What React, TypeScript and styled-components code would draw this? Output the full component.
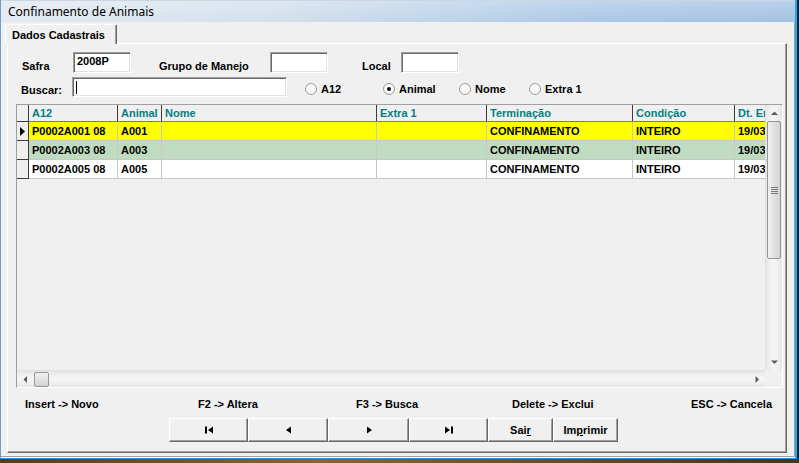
import React from 'react';
import styled, { createGlobalStyle } from 'styled-components';

const GlobalStyle = createGlobalStyle`
  html, body {
    margin: 0;
    padding: 0;
  }
  body {
    background: #0f2240;
    font-family: "Liberation Sans", Arial, sans-serif;
  }
`;

const Screen = styled.div`
  width: 799px;
  height: 463px;
  overflow: hidden;
  display: flex;
  flex-direction: column;
  background: #0e2342;
`;

const Desktop = styled.div`
  flex: 1;
  background: linear-gradient(to right, #5a3a1c, #8a6236 40%, #4a321c);
`;

const Window = styled.div`
  width: 797px;
  height: 459px;
  box-sizing: border-box;
  display: flex;
  flex-direction: column;
  border-left: 1px solid #6a9fd2;
  border-right: 2px solid #25a6e2;
  border-bottom: 1px solid #3b8ad0;
  background: #f0f0f0;
`;

const TitleBar = styled.div`
  height: 22px;
  flex: none;
  display: flex;
  align-items: center;
  padding-left: 7px;
  background: linear-gradient(to bottom, rgba(255, 255, 255, 0.25), rgba(255, 255, 255, 0)),
    linear-gradient(to right, #e3e9f0 0%, #d2dfec 35%, #aac7e6 75%, #a3c2e3 100%);
  border-top: 1px solid #c9d6e4;
  box-sizing: border-box;
  font-family: "Noto Sans", "Liberation Sans", sans-serif;
  font-size: 12px;
  color: #000;
`;

const Client = styled.div`
  flex: 1;
  display: flex;
  flex-direction: column;
  padding: 2px 0 0 4px;
  box-shadow: inset 0 -1px #ffffff, inset 0 -2px #a0a0a0, inset -1px 0 #a0a0a0;
`;

const TabStrip = styled.div`
  display: flex;
  height: 19px;
`;

const Tab = styled.div`
  display: flex;
  align-items: center;
  padding: 0 8px 0 6px;
  width: 112px;
  box-sizing: border-box;
  border-left: 1px solid #ffffff;
  border-top: 1px solid #ffffff;
  border-right: 1px solid #696969;
  box-shadow: inset -1px 0 #a0a0a0;
  border-radius: 2px 2px 0 0;
  font-size: 11px;
  font-weight: bold;
  color: #000;
  position: relative;
  z-index: 1;
  background: #f0f0f0;
  margin-bottom: -1px;
`;

const TabPanel = styled.div`
  margin-left: 2px;
  width: 780px;
  height: 410px;
  box-sizing: border-box;
  border-top: 1px solid #ffffff;
  border-left: 1px solid #ffffff;
  border-right: 1px solid #696969;
  border-bottom: 1px solid #696969;
  box-shadow: inset -1px -1px #a0a0a0;
  display: flex;
  flex-direction: column;
`;

const FieldRow = styled.div<{ $top: number; $indent: number; $height: number }>`
  display: flex;
  align-items: flex-end;
  margin-top: ${(p) => p.$top}px;
  padding-left: ${(p) => p.$indent}px;
  height: ${(p) => p.$height}px;
`;

const Label = styled.div<{ $w: number; $gap?: number }>`
  width: ${(p) => p.$w}px;
  margin-left: ${(p) => p.$gap ?? 0}px;
  flex: none;
  font-size: 11px;
  font-weight: bold;
  color: #000;
  padding-bottom: 1px;
  white-space: nowrap;
`;

const TextBox = styled.div<{ $w: number; $h: number }>`
  width: ${(p) => p.$w}px;
  height: ${(p) => p.$h}px;
  flex: none;
  box-sizing: border-box;
  background: #ffffff;
  border-top: 1px solid #a0a0a0;
  border-left: 1px solid #a0a0a0;
  border-right: 1px solid #ffffff;
  border-bottom: 1px solid #ffffff;
  box-shadow: inset 1px 1px #696969, inset -1px -1px #e3e3e3;
  padding: 2px 3px;
  font-size: 11px;
  font-weight: bold;
  color: #000;
  line-height: 12px;
`;

const Caret = styled.span`
  display: inline-block;
  width: 1px;
  height: 13px;
  background: #000;
  margin-top: 1px;
`;

const RadioGroup = styled.div`
  display: flex;
  align-items: center;
  margin-left: 18px;
  height: 20px;
  align-self: stretch;
`;

const RadioItem = styled.div<{ $w?: number }>`
  display: flex;
  align-items: center;
  gap: 4px;
  width: ${(p) => (p.$w ? `${p.$w}px` : 'auto')};
  font-size: 11px;
  font-weight: bold;
  color: #000;
  padding-top: 4px;
`;

const RadioCircle = styled.span<{ $checked?: boolean }>`
  width: 12px;
  height: 12px;
  box-sizing: border-box;
  border-radius: 50%;
  border: 1px solid #9c9c9c;
  background: radial-gradient(circle, #ffffff 40%, #ececec 100%);
  display: inline-flex;
  align-items: center;
  justify-content: center;

  &::after {
    content: '';
    width: 4px;
    height: 4px;
    border-radius: 50%;
    background: ${(p) => (p.$checked ? '#111' : 'transparent')};
  }
`;

const Grid = styled.div`
  margin-top: 7px;
  margin-left: 8px;
  width: 767px;
  height: 284px;
  box-sizing: border-box;
  border-top: 1px solid #a0a0a0;
  border-left: 1px solid #a0a0a0;
  border-right: 1px solid #ffffff;
  border-bottom: 1px solid #ffffff;
  display: grid;
  grid-template-columns: 1fr 17px;
  grid-template-rows: 1fr 17px;
  background: #f0f0f0;
`;

const DataArea = styled.div`
  overflow: hidden;
  display: flex;
  flex-direction: column;
`;

const GridRow = styled.div<{ $bg: string; $header?: boolean }>`
  display: flex;
  flex: none;
  height: ${(p) => (p.$header ? 16 : 18)}px;
  background: ${(p) => p.$bg};
  border-bottom: 1px solid ${(p) => (p.$header ? '#7a7a7a' : '#c8c8c8')};
  width: max-content;
`;

const Cell = styled.div<{ $w: number; $header?: boolean }>`
  width: ${(p) => p.$w}px;
  flex: none;
  box-sizing: border-box;
  border-right: 1px solid ${(p) => (p.$header ? '#3c3c3c' : '#c8c8c8')};
  padding-left: 3px;
  display: flex;
  align-items: center;
  font-size: 11px;
  font-weight: bold;
  color: ${(p) => (p.$header ? '#008080' : '#000')};
  white-space: nowrap;
  overflow: hidden;
`;

const Indicator = styled.div`
  width: 12px;
  flex: none;
  box-sizing: border-box;
  background: #f0f0f0;
  border-right: 1px solid #3c3c3c;
  box-shadow: 0 1px #3c3c3c;
  display: flex;
  align-items: center;
  justify-content: center;
`;

const VScroll = styled.div`
  display: flex;
  flex-direction: column;
  background: linear-gradient(to right, #e6e6e6, #f4f4f4 40%, #f4f4f4 60%, #e6e6e6);
  border-left: 1px solid #e0e0e0;
`;

const HScroll = styled.div`
  display: flex;
  align-items: center;
  background: linear-gradient(to bottom, #e6e6e6, #f4f4f4 40%, #f4f4f4 60%, #e6e6e6);
  border-top: 1px solid #e0e0e0;
`;

const ArrowBox = styled.div<{ $size: number }>`
  width: ${(p) => p.$size}px;
  height: ${(p) => p.$size}px;
  flex: none;
  display: flex;
  align-items: center;
  justify-content: center;
`;

const VThumb = styled.div`
  margin: 0 1px;
  height: 138px;
  box-sizing: border-box;
  border: 1px solid #979797;
  border-radius: 2px;
  background: linear-gradient(to right, #f2f2f2, #e2e2e2 50%, #d2d2d2);
  display: flex;
  align-items: center;
  justify-content: center;
  flex: none;
`;

const HThumb = styled.div`
  width: 15px;
  height: 15px;
  box-sizing: border-box;
  border: 1px solid #979797;
  border-radius: 2px;
  background: linear-gradient(to bottom, #f2f2f2, #e2e2e2 50%, #d2d2d2);
  flex: none;
  margin-left: 1px;
`;

const Spacer = styled.div`
  flex: 1;
`;

const Corner = styled.div`
  background: #f0f0f0;
`;

const ShortcutRow = styled.div`
  display: flex;
  margin-top: 9px;
  padding-left: 17px;
  height: 13px;
  align-items: center;
`;

const Shortcut = styled.div<{ $w?: number }>`
  width: ${(p) => (p.$w ? `${p.$w}px` : 'auto')};
  flex: none;
  font-size: 11px;
  font-weight: bold;
  color: #000;
  white-space: nowrap;
`;

const ButtonRow = styled.div`
  display: flex;
  margin-top: 8px;
  padding-left: 161px;
  height: 24px;
`;

const Button = styled.button<{ $w: number }>`
  width: ${(p) => p.$w}px;
  height: 24px;
  box-sizing: border-box;
  background: #f0f0f0;
  border: none;
  border-top: 1px solid #ffffff;
  border-left: 1px solid #ffffff;
  border-right: 1px solid #696969;
  border-bottom: 1px solid #696969;
  box-shadow: inset -1px -1px #a0a0a0;
  border-radius: 0;
  padding: 0;
  margin: 0;
  display: flex;
  align-items: center;
  justify-content: center;
  font-family: "Liberation Sans", Arial, sans-serif;
  font-size: 11px;
  font-weight: bold;
  color: #000;

  u {
    text-underline-offset: 1px;
  }
`;

const Tri = ({ dir, color = '#5a5a5a' }: { dir: 'up' | 'down' | 'left' | 'right'; color?: string }) => {
  const pts: Record<string, string> = {
    up: '0,4 3.5,0.5 7,4',
    down: '0,0.5 3.5,4 7,0.5',
    left: '4,0 0.5,3.5 4,7',
    right: '0.5,0 4,3.5 0.5,7',
  };
  const vertical = dir === 'up' || dir === 'down';
  return (
    <svg width={vertical ? 7 : 4} height={vertical ? 4 : 7} viewBox={vertical ? '0 0 7 4' : '0 0 4 7'}>
      <polygon points={pts[dir]} fill={color} />
    </svg>
  );
};

const NavIcon = ({ kind }: { kind: 'first' | 'prev' | 'next' | 'last' }) => (
  <svg width="10" height="8" viewBox="0 0 10 8">
    {kind === 'first' && (
      <>
        <rect x="1" y="0.5" width="2" height="7" fill="#000" />
        <polygon points="9,0.5 4,4 9,7.5" fill="#000" />
      </>
    )}
    {kind === 'prev' && <polygon points="8,0.5 3,4 8,7.5" fill="#000" />}
    {kind === 'next' && <polygon points="3,0.5 8,4 3,7.5" fill="#000" />}
    {kind === 'last' && (
      <>
        <polygon points="1,0.5 6,4 1,7.5" fill="#000" />
        <rect x="7" y="0.5" width="2" height="7" fill="#000" />
      </>
    )}
  </svg>
);

const columns = [
  { key: 'a12', title: 'A12', w: 89 },
  { key: 'animal', title: 'Animal', w: 44 },
  { key: 'nome', title: 'Nome', w: 215 },
  { key: 'extra', title: 'Extra 1', w: 110 },
  { key: 'term', title: 'Terminação', w: 146 },
  { key: 'cond', title: 'Condição', w: 102 },
  { key: 'dt', title: 'Dt. Entrada', w: 90 },
];

const rows = [
  { bg: '#ffff00', current: true, a12: 'P0002A001 08', animal: 'A001', nome: '', extra: '', term: 'CONFINAMENTO', cond: 'INTEIRO', dt: '19/03/2008' },
  { bg: '#c0dcc0', current: false, a12: 'P0002A003 08', animal: 'A003', nome: '', extra: '', term: 'CONFINAMENTO', cond: 'INTEIRO', dt: '19/03/2008' },
  { bg: '#ffffff', current: false, a12: 'P0002A005 08', animal: 'A005', nome: '', extra: '', term: 'CONFINAMENTO', cond: 'INTEIRO', dt: '19/03/2008' },
];

export default function App() {
  return (
    <>
      <GlobalStyle />
      <Screen>
        <Window>
          <TitleBar>Confinamento de Animais</TitleBar>
          <Client>
            <TabStrip>
              <Tab>Dados Cadastrais</Tab>
            </TabStrip>
            <TabPanel>
              <FieldRow $top={8} $indent={14} $height={21}>
                <Label $w={51}>Safra</Label>
                <TextBox $w={58} $h={21}>2008P</TextBox>
                <Label $w={111} $gap={28}>Grupo de Manejo</Label>
                <TextBox $w={58} $h={21} />
                <Label $w={39} $gap={34}>Local</Label>
                <TextBox $w={58} $h={21} />
              </FieldRow>
              <FieldRow $top={4} $indent={13} $height={20}>
                <Label $w={51}>Buscar:</Label>
                <TextBox $w={215} $h={20}>
                  <Caret />
                </TextBox>
                <RadioGroup>
                  <RadioItem $w={78}>
                    <RadioCircle />
                    A12
                  </RadioItem>
                  <RadioItem $w={76}>
                    <RadioCircle $checked />
                    Animal
                  </RadioItem>
                  <RadioItem $w={70}>
                    <RadioCircle />
                    Nome
                  </RadioItem>
                  <RadioItem>
                    <RadioCircle />
                    Extra 1
                  </RadioItem>
                </RadioGroup>
              </FieldRow>

              <Grid>
                <DataArea>
                  <GridRow $bg="#f0f0f0" $header>
                    <Indicator />
                    {columns.map((c) => (
                      <Cell key={c.key} $w={c.w} $header>
                        {c.title}
                      </Cell>
                    ))}
                  </GridRow>
                  {rows.map((r) => (
                    <GridRow key={r.a12} $bg={r.bg}>
                      <Indicator>
                        {r.current && (
                          <svg width="5" height="9" viewBox="0 0 5 9">
                            <polygon points="0,0 5,4.5 0,9" fill="#000" />
                          </svg>
                        )}
                      </Indicator>
                      {columns.map((c) => (
                        <Cell key={c.key} $w={c.w}>
                          {(r as Record<string, string | boolean>)[c.key] as string}
                        </Cell>
                      ))}
                    </GridRow>
                  ))}
                </DataArea>
                <VScroll>
                  <ArrowBox $size={16}>
                    <Tri dir="up" />
                  </ArrowBox>
                  <VThumb>
                    <svg width="7" height="7" viewBox="0 0 7 7">
                      <rect x="0" y="0" width="7" height="1" fill="#7a7a7a" />
                      <rect x="0" y="2" width="7" height="1" fill="#7a7a7a" />
                      <rect x="0" y="4" width="7" height="1" fill="#7a7a7a" />
                      <rect x="0" y="6" width="7" height="1" fill="#7a7a7a" />
                    </svg>
                  </VThumb>
                  <Spacer />
                  <ArrowBox $size={16}>
                    <Tri dir="down" />
                  </ArrowBox>
                </VScroll>
                <HScroll>
                  <ArrowBox $size={16}>
                    <Tri dir="left" />
                  </ArrowBox>
                  <HThumb />
                  <Spacer />
                  <ArrowBox $size={16}>
                    <Tri dir="right" />
                  </ArrowBox>
                </HScroll>
                <Corner />
              </Grid>

              <ShortcutRow>
                <Shortcut $w={173}>Insert -&gt; Novo</Shortcut>
                <Shortcut $w={158}>F2 -&gt; Altera</Shortcut>
                <Shortcut $w={156}>F3 -&gt; Busca</Shortcut>
                <Shortcut $w={179}>Delete -&gt; Exclui</Shortcut>
                <Shortcut>ESC -&gt; Cancela</Shortcut>
              </ShortcutRow>

              <ButtonRow>
                <Button $w={79}>
                  <NavIcon kind="first" />
                </Button>
                <Button $w={80}>
                  <NavIcon kind="prev" />
                </Button>
                <Button $w={81}>
                  <NavIcon kind="next" />
                </Button>
                <Button $w={79}>
                  <NavIcon kind="last" />
                </Button>
                <Button $w={65}>
                  Sai<u>r</u>
                </Button>
                <Button $w={65}>
                  Im<u>p</u>rimir
                </Button>
              </ButtonRow>
            </TabPanel>
          </Client>
        </Window>
        <Desktop />
      </Screen>
    </>
  );
}
